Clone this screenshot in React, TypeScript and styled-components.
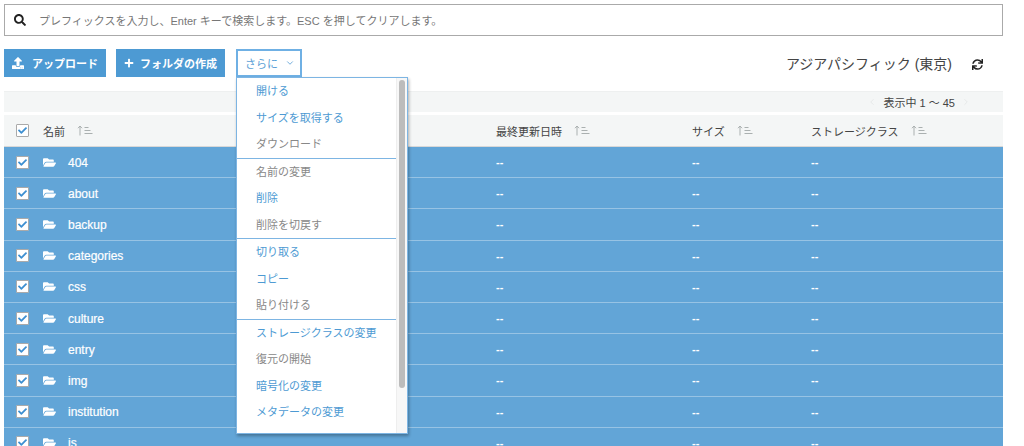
import React from 'react';
import styled, { createGlobalStyle } from 'styled-components';
import { FaCheck, FaFolderOpen, FaPlus, FaSearch, FaSync, FaUpload } from 'react-icons/fa';
import { ChevronDown, ChevronLeft, ChevronRight } from 'lucide-react';

const folders = ['404', 'about', 'backup', 'categories', 'css', 'culture', 'entry', 'img', 'institution', 'js'];

const menuGroups = [
  [
    { label: '開ける', active: true },
    { label: 'サイズを取得する', active: true },
    { label: 'ダウンロード', active: false },
  ],
  [
    { label: '名前の変更', active: false },
    { label: '削除', active: true },
    { label: '削除を切戻す', active: false },
  ],
  [
    { label: '切り取る', active: true },
    { label: 'コピー', active: true },
    { label: '貼り付ける', active: false },
  ],
  [
    { label: 'ストレージクラスの変更', active: true },
    { label: '復元の開始', active: false },
    { label: '暗号化の変更', active: true },
    { label: 'メタデータの変更', active: true },
  ],
];

const SortIcon = () => (
  <SortSvg viewBox="0 0 16 11" width="16" height="11">
    <path d="M3 10.5V1M1 3.2 3 1l2 2.2" fill="none" stroke="#aab0b0" strokeWidth="1" />
    <path d="M7.5 2.5h4M7.5 5.5h6M7.5 8.5h8" fill="none" stroke="#aab0b0" strokeWidth="1" />
  </SortSvg>
);

const App: React.FC = () => {
  return (
    <Page>
      <GlobalStyle />
      <SearchBox>
        <FaSearch size={12} color="#222" />
        <SearchHint>プレフィックスを入力し、Enter キーで検索します。ESC を押してクリアします。</SearchHint>
      </SearchBox>
      <Toolbar>
        <PrimaryButton $width={102} $gap={8}>
          <FaUpload size={12} />
          アップロード
        </PrimaryButton>
        <PrimaryButton $width={109} $gap={6}>
          <FaPlus size={10} />
          フォルダの作成
        </PrimaryButton>
        <MoreWrap>
          <MoreButton>
            さらに
            <ChevronDown size={10} strokeWidth={2} />
          </MoreButton>
          <Menu>
            <MenuList>
              {menuGroups.map((group, i) => (
                <MenuGroup key={i}>
                  {group.map(item => (
                    <MenuItem key={item.label} $active={item.active}>
                      {item.label}
                    </MenuItem>
                  ))}
                </MenuGroup>
              ))}
            </MenuList>
            <ScrollTrack>
              <ScrollThumb />
            </ScrollTrack>
          </Menu>
        </MoreWrap>
        <Region>アジアパシフィック (東京)</Region>
        <RefreshButton>
          <FaSync size={11} />
        </RefreshButton>
      </Toolbar>
      <PagerBar>
        <ChevronLeft size={10} color="#e3e6e6" />
        <PagerText>表示中 1 〜 45</PagerText>
        <ChevronRight size={10} color="#e3e6e6" />
      </PagerBar>
      <HeadRow>
        <CheckCell>
          <CheckBox>
            <FaCheck size={9} />
          </CheckBox>
        </CheckCell>
        <HeadCell $width={453}>
          名前
          <SortIcon />
        </HeadCell>
        <HeadCell $width={196}>
          最終更新日時
          <SortIcon />
        </HeadCell>
        <HeadCell $width={119}>
          サイズ
          <SortIcon />
        </HeadCell>
        <HeadCell>
          ストレージクラス
          <SortIcon />
        </HeadCell>
      </HeadRow>
      {folders.map(name => (
        <Row key={name}>
          <CheckCell>
            <CheckBox>
              <FaCheck size={9} />
            </CheckBox>
          </CheckCell>
          <NameCell>
            <FaFolderOpen size={13} />
            <FolderName>{name}</FolderName>
          </NameCell>
          <DataCell $width={196}>--</DataCell>
          <DataCell $width={119}>--</DataCell>
          <DataCell>--</DataCell>
        </Row>
      ))}
    </Page>
  );
};

const GlobalStyle = createGlobalStyle`
  html, body {
    margin: 0;
    height: 100%;
    overflow: hidden;
    background: #fff;
  }
  body {
    font-family: "Liberation Sans", "Noto Sans CJK JP", sans-serif;
    font-size: 11px;
    color: #444;
  }
`;

const Page = styled.div`
  width: 999px;
  height: 446px;
  margin-left: 4px;
  padding-top: 4px;
  box-sizing: border-box;
  overflow: hidden;
`;

const SearchBox = styled.div`
  display: flex;
  align-items: center;
  gap: 13px;
  height: 32px;
  box-sizing: border-box;
  padding-left: 9px;
  border: 1px solid #aaa;
`;

const SearchHint = styled.span`
  color: #777;
  font-size: 11px;
`;

const Toolbar = styled.div`
  display: flex;
  align-items: center;
  gap: 10px;
  height: 28px;
  margin-top: 13px;
`;

const PrimaryButton = styled.button<{ $width: number; $gap: number }>`
  display: flex;
  align-items: center;
  gap: ${p => p.$gap}px;
  flex: none;
  width: ${p => p.$width}px;
  height: 28px;
  padding: 0 0 0 8px;
  border: 0;
  background: #4d9ad3;
  color: #fff;
  font: inherit;
  font-size: 11px;
  font-weight: 700;
  white-space: nowrap;
`;

const MoreWrap = styled.div`
  position: relative;
  flex: 1;
  margin-left: 1px;
`;

const MoreButton = styled.button`
  display: flex;
  align-items: center;
  gap: 7px;
  width: 66px;
  height: 28px;
  box-sizing: border-box;
  padding: 0 0 0 7px;
  border: 2px solid #6fb0e4;
  background: #fff;
  color: #5a9fd6;
  font: inherit;
  font-size: 11px;
`;

const Menu = styled.div`
  position: absolute;
  z-index: 2;
  top: 28px;
  left: 0;
  display: flex;
  width: 172px;
  height: 357px;
  box-sizing: border-box;
  border: 1px solid #7db5e3;
  background: #fff;
  box-shadow: 1px 2px 3px rgba(0, 0, 0, 0.3);
`;

const MenuList = styled.div`
  flex: 1;
`;

const MenuGroup = styled.div`
  border-bottom: 1px solid #7db5e3;

  &:last-child {
    border-bottom: 0;
  }
`;

const MenuItem = styled.div<{ $active: boolean }>`
  height: 26.5px;
  padding-left: 19px;
  line-height: 26.5px;
  color: ${p => (p.$active ? '#4d9ad3' : '#888')};
  font-size: 11px;
`;

const ScrollTrack = styled.div`
  width: 11px;
  padding: 2px 2px 0;
  box-sizing: border-box;
  background: #f7f7f7;
  border-left: 1px solid #eee;
`;

const ScrollThumb = styled.div`
  width: 6px;
  height: 308px;
  border-radius: 3px;
  background: #bcbcbc;
`;

const Region = styled.div`
  margin-left: auto;
  color: #444;
  font-size: 14px;
`;

const RefreshButton = styled.div`
  display: flex;
  align-items: center;
  margin: 2px 20px 0 10px;
  color: #222;
`;

const PagerBar = styled.div`
  display: flex;
  align-items: center;
  justify-content: flex-end;
  gap: 6px;
  height: 21px;
  margin-top: 14px;
  padding-right: 32px;
  background: #f4f6f6;
  border-top: 1px solid #eef0f0;
  box-sizing: border-box;
`;

const PagerText = styled.span`
  color: #444;
  font-size: 11px;
`;

const HeadRow = styled.div`
  display: flex;
  align-items: center;
  height: 32px;
  margin-top: 3px;
  box-sizing: border-box;
  background: #f4f6f6;
  border-bottom: 1px solid #d8d8d8;
`;

const CheckCell = styled.div`
  display: flex;
  flex: none;
  width: 39px;
  padding-left: 12px;
  box-sizing: border-box;
`;

const CheckBox = styled.span`
  display: flex;
  align-items: center;
  justify-content: center;
  width: 13px;
  height: 13px;
  box-sizing: border-box;
  background: #fff;
  border: 1px solid #aaa;
  border-radius: 1px;
  color: #3d8fd1;
`;

const HeadCell = styled.div<{ $width?: number }>`
  display: flex;
  align-items: center;
  gap: 12px;
  flex: ${p => (p.$width ? 'none' : 1)};
  width: ${p => (p.$width ? `${p.$width}px` : 'auto')};
  color: #444;
  font-size: 11px;
`;

const SortSvg = styled.svg`
  flex: none;
`;

const Row = styled.div`
  display: flex;
  align-items: center;
  height: 31.2px;
  box-sizing: border-box;
  background: #62a5d7;
  border-bottom: 1px solid #97c3e4;
  color: #fff;
`;

const NameCell = styled.div`
  display: flex;
  align-items: center;
  gap: 12px;
  flex: none;
  width: 453px;
`;

const FolderName = styled.span`
  padding-top: 1px;
  font-size: 12px;
  -webkit-text-stroke: 0.2px #fff;
`;

const DataCell = styled.div<{ $width?: number }>`
  flex: ${p => (p.$width ? 'none' : 1)};
  width: ${p => (p.$width ? `${p.$width}px` : 'auto')};
  font-size: 11px;
  font-weight: 700;
`;

export default App;
